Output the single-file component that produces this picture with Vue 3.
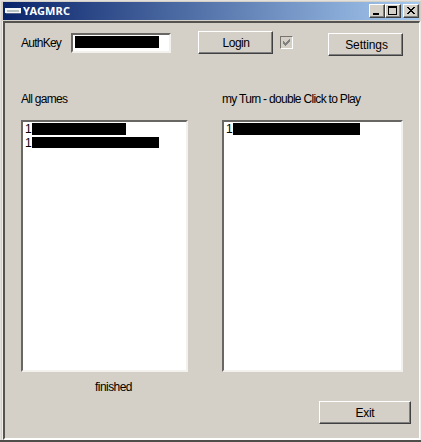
<script setup>
const allGames = [
  { id: 1, width: 94, height: 12 },
  { id: 1, width: 127, height: 11 },
]
const myTurn = [{ id: 1, width: 127, height: 12 }]
</script>

<template>
  <div class="window">
    <header class="titlebar">
      <svg class="app-icon" width="16" height="6" viewBox="0 0 16 6" shape-rendering="crispEdges">
        <rect width="16" height="5" fill="#f4f6f8" />
        <rect x="2" y="2" width="12" height="2" fill="#b9c4c2" />
        <rect x="1" y="5" width="15" height="1" fill="#536488" />
      </svg>
      <h1>YAGMRC</h1>
      <div class="controls">
        <button class="caption" aria-label="Minimize">
          <svg width="12" height="10" viewBox="0 0 12 10" shape-rendering="crispEdges"><rect x="2" y="7" width="6" height="2" /></svg>
        </button>
        <button class="caption" aria-label="Maximize">
          <svg width="12" height="10" viewBox="0 0 12 10" shape-rendering="crispEdges"><path fill-rule="evenodd" d="M1 0h9v9H1zM2 2v6h7V2z" /></svg>
        </button>
        <button class="caption close" aria-label="Close">
          <svg width="12" height="10" viewBox="0 0 12 10" shape-rendering="crispEdges"><path d="M2 1h2v1h1v1h2V2h1V1h2v1H9v1H8v1H7v1h1v1h1v1h1v1H8V7H7V6H5v1H4v1H2V7h1V6h1V5h1V4H4V3H3V2H2z" /></svg>
        </button>
      </div>
    </header>
    <main class="client">
      <section class="toolbar">
        <span class="auth-label">AuthKey</span>
        <div class="field"><i class="mask"></i></div>
        <button class="btn login">Login</button>
        <span class="check">
          <svg width="9" height="9" viewBox="0 0 9 9" shape-rendering="crispEdges"><path fill="#808080" d="M1 3h1v1h1v1h1V4h1V3h1V2h1V1h1v3H7v1H6v1H5v1H4v1H3V7H2V6H1z" /></svg>
        </span>
        <button class="btn settings">Settings</button>
      </section>
      <section class="lists">
        <div class="all">
          <h2>All games</h2>
          <ul>
            <li v-for="(g, i) in allGames" :key="i">
              <span>{{ g.id }}</span><i :style="{ width: g.width + 'px', height: g.height + 'px' }"></i>
            </li>
          </ul>
          <p>finished</p>
        </div>
        <div class="mine">
          <h2>my Turn - double Click to Play</h2>
          <ul>
            <li v-for="(g, i) in myTurn" :key="i">
              <span>{{ g.id }}</span><i :style="{ width: g.width + 'px', height: g.height + 'px' }"></i>
            </li>
          </ul>
        </div>
      </section>
      <footer><button class="btn exit">Exit</button></footer>
    </main>
  </div>
</template>

<style>
body { background: #d4d0c8; overflow: hidden; }
</style>

<style scoped>
* { box-sizing: border-box; margin: 0; padding: 0; }
.window {
  width: 421px; height: 442px; padding: 2px 1px 0 2px;
  display: flex; flex-direction: column;
  background: #d4d0c8; color: #000;
  border-bottom: 2px solid #504e4b;
  box-shadow: inset 1px 1px #e4e1dc;
  font: 12px/14px "Liberation Sans", Arial, sans-serif;
}
.titlebar {
  height: 18px; margin: 0 0 1px 1px; padding: 0 1px 0 2px; flex: none;
  display: flex; align-items: center;
  background: linear-gradient(90deg, #0a246a, #a6caf0);
}
.app-icon { margin-right: 2px; }
h1 { color: #fff; font: bold 11px/16px "Noto Sans", sans-serif; letter-spacing: 0.15px; }
.controls { display: flex; margin-left: auto; }
button { font: inherit; color: #000; background: #d4d0c8; }
.caption {
  width: 16px; height: 14px; display: flex; align-items: center; justify-content: center;
  border: 1px solid; border-color: #fff #404040 #404040 #fff;
  box-shadow: inset -1px -1px #808080;
}
.caption svg { flex: none; }
.close { margin-left: 2px; }
.client {
  flex: 1; min-height: 0; display: flex; flex-direction: column;
  border: solid; border-width: 2px 1px 2px 2px;
  border-color: #55534f #fff #fff #55534f;
  margin-left: 1px;
  outline: 1px solid #f1efeb;
  padding-left: 16px;
  clip-path: inset(0 -1px 0 -1px);
}
.toolbar { height: 69px; padding-top: 8px; display: flex; align-items: flex-start; flex: none; }
.auth-label { width: 50px; margin-top: 5px; letter-spacing: -0.75px; }
.field {
  width: 100px; height: 20px; margin-top: 2px; padding: 1px 2px; background: #fff;
  border: 2px solid; border-color: #696764 #f3f1ed #f3f1ed #696764;
}
.mask { display: block; width: 84px; height: 12px; background: #000; }
.btn {
  height: 23px; text-align: center; line-height: 20px; letter-spacing: -0.3px;
  border: 1px solid; border-color: #fff #404040 #404040 #fff;
  box-shadow: inset -1px -1px #808080;
}
.login { width: 75px; margin-left: 27px; padding-left: 1px; letter-spacing: -0.5px; }
.check {
  width: 13px; height: 13px; margin: 5px 0 0 7px; display: grid; place-items: center;
  border: 1px solid; border-color: #777470 #fff #fff #777470;
}
.settings { width: 75px; margin: 2px 0 0 35px; padding-left: 2px; letter-spacing: -0.1px; }
.lists { display: flex; gap: 34px; flex: none; height: 309px; }
.all { width: 167px; }
.mine { width: 181px; }
h2 { font-weight: normal; font-size: 12px; line-height: 14px; height: 28px; letter-spacing: -0.7px; white-space: nowrap; }
ul {
  height: 252px; list-style: none; background: #fff; padding: 1px 0 0 2px;
  border: 2px solid; border-color: #696764 #f3f1ed #f3f1ed #696764;
}
li { display: flex; height: 14px; line-height: 13px; }
li span { width: 7px; }
li i { background: #000; }
p { margin-top: 8px; padding-left: 74px; letter-spacing: -0.55px; }
footer { display: flex; padding-left: 298px; }
.exit { width: 92px; }
</style>
